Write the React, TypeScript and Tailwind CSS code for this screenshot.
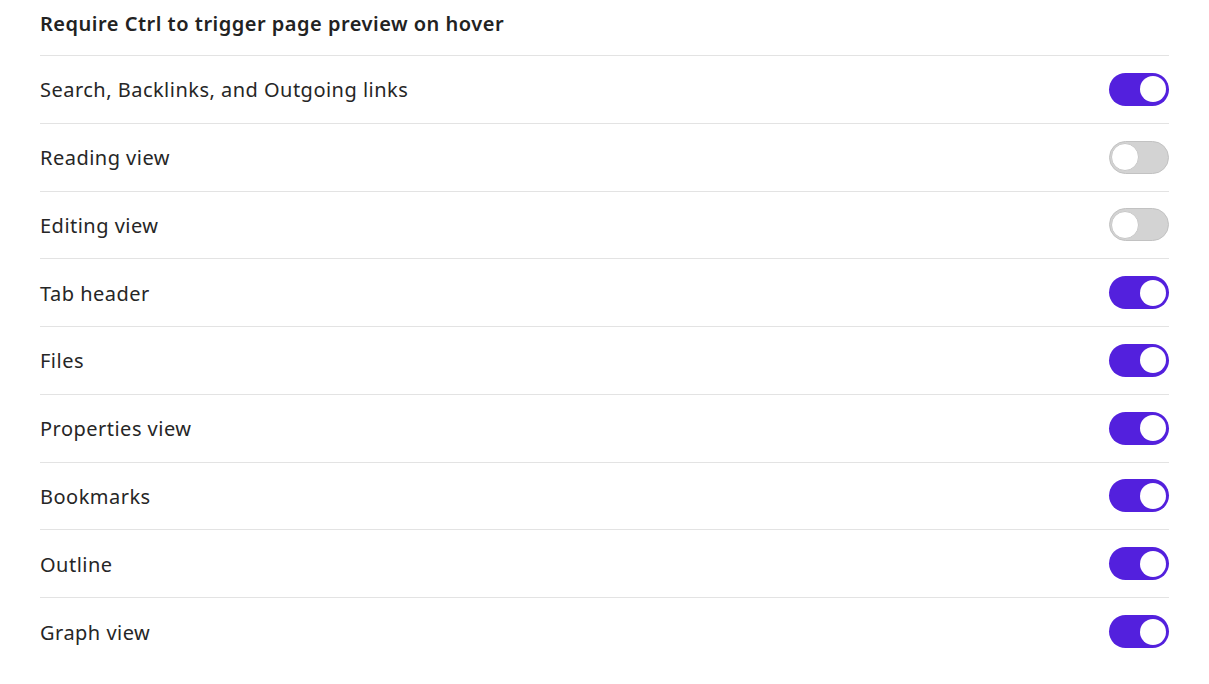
const items: { label: string; on: boolean }[] = [
  { label: 'Search, Backlinks, and Outgoing links', on: true },
  { label: 'Reading view', on: false },
  { label: 'Editing view', on: false },
  { label: 'Tab header', on: true },
  { label: 'Files', on: true },
  { label: 'Properties view', on: true },
  { label: 'Bookmarks', on: true },
  { label: 'Outline', on: true },
  { label: 'Graph view', on: true },
]

function Toggle({ on }: { on: boolean }) {
  return (
    <div
      className={
        on
          ? 'flex h-[33px] w-[60px] items-center justify-end rounded-full bg-[#5320dd] px-[3px]'
          : 'flex h-[33px] w-[60px] items-center justify-start rounded-full border border-[#c2c2c2] bg-[#d3d3d3] px-[1px]'
      }
    >
      <div
        className={
          on
            ? 'h-[26px] w-[26px] rounded-full bg-white'
            : 'h-[28px] w-[28px] rounded-full border border-[#c8c8c8] bg-white'
        }
      />
    </div>
  )
}

export default function App() {
  return (
    <div
      className="min-h-[684px] bg-white px-10 text-[#222222]"
      style={{ fontFamily: '"Noto Sans", "Open Sans", sans-serif' }}
    >
      <div className="flex h-[56px] items-center border-b border-[#e3e3e3] pb-[7px] text-[20px] font-semibold tracking-[0.5px]">
        Require Ctrl to trigger page preview on hover
      </div>
      {items.map((item, i) => (
        <div
          key={item.label}
          className={
            i === items.length - 1
              ? 'flex h-[67.75px] items-center justify-between'
              : 'flex h-[67.75px] items-center justify-between border-b border-[#e3e3e3]'
          }
        >
          <span className="pt-[2px] text-[20px] tracking-[0.48px] text-[#262626]">{item.label}</span>
          <Toggle on={item.on} />
        </div>
      ))}
    </div>
  )
}
